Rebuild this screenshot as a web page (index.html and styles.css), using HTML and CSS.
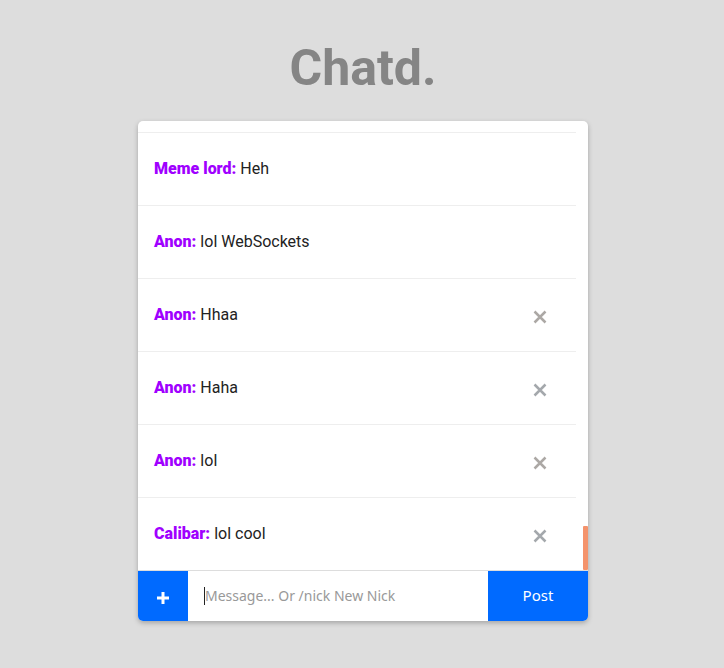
FILE: index.html
```html
<!DOCTYPE html>
<html lang="en">
<head>
<meta charset="utf-8">
<meta name="viewport" content="width=device-width, initial-scale=1">
<title>Chatd.</title>
<link rel="stylesheet" href="styles.css">
</head>
<body>
<h1 class="title">Chatd.</h1>
<main class="chat">
  <div class="messages">
    <ul class="list">
      <li class="message"><p><strong>Meme lord:</strong> Heh</p></li>
      <li class="message"><p><strong>Anon:</strong> lol WebSockets</p></li>
      <li class="message"><p><strong>Anon:</strong> Hhaa</p><button class="remove" type="button" aria-label="Delete message"><svg viewBox="0 0 32 32"><path d="M5 5l22 22M27 5L5 27"/></svg></button></li>
      <li class="message"><p><strong>Anon:</strong> Haha</p><button class="remove cool" type="button" aria-label="Delete message"><svg viewBox="0 0 32 32"><path d="M5 5l22 22M27 5L5 27"/></svg></button></li>
      <li class="message"><p><strong>Anon:</strong> lol</p><button class="remove" type="button" aria-label="Delete message"><svg viewBox="0 0 32 32"><path d="M5 5l22 22M27 5L5 27"/></svg></button></li>
      <li class="message"><p><strong>Calibar:</strong> lol cool</p><button class="remove cool" type="button" aria-label="Delete message"><svg viewBox="0 0 32 32"><path d="M5 5l22 22M27 5L5 27"/></svg></button></li>
    </ul>
    <div class="scroll"><div class="thumb"></div></div>
  </div>
  <form class="composer">
    <button class="add" type="button" aria-label="Add"><svg viewBox="0 0 12 12"><path d="M6 0v12M0 6h12"/></svg></button>
    <div class="field"><span class="caret"></span><input class="input" type="text" aria-label="Message" placeholder="Message... Or /nick New Nick"></div>
    <button class="post" type="submit">Post</button>
  </form>
</main>
</body>
</html>
```
FILE: styles.css
```css
* { box-sizing: border-box; }
body {
  margin: 0;
  padding: 36px 16px 36px 18px;
  background: #ddd;
  color: #222;
  font: 16px/24px Roboto, sans-serif;
}
.title {
  margin: 0 0 21px;
  color: #858585;
  font: 700 50px/64px Roboto, sans-serif;
  text-align: center;
}
.chat {
  max-width: 450px;
  margin: 0 auto;
  overflow: hidden;
  border-radius: 5px;
  background: #fff;
  box-shadow: 0 2px 5px rgba(0, 0, 0, .26);
}
.messages {
  display: flex;
  padding-top: 11px;
  border-bottom: 1px solid #ddd;
}
.list {
  flex: 1;
  margin: 0;
  padding: 0;
  list-style: none;
}
.message {
  display: flex;
  align-items: center;
  justify-content: space-between;
  height: 73px;
  padding: 0 28px 0 16px;
  border-top: 1px solid #eee;
}
.message p { margin: 0; }
.message strong { color: #a000ff; font-weight: 900; }
.remove {
  display: flex;
  margin: 3px 0 0;
  padding: 0;
  border: 0;
  background: none;
  color: #aca8a5;
}
.remove.cool { color: #a4a8ac; }
.remove svg {
  width: 16px;
  height: 16px;
  fill: none;
  stroke: currentColor;
  stroke-width: 5;
}
.scroll {
  display: flex;
  align-items: flex-end;
  justify-content: flex-end;
  width: 12px;
}
.thumb {
  width: 5px;
  height: 44px;
  border-radius: 1px;
  background: #f4936c;
}
.composer {
  display: flex;
  height: 50px;
}
.add, .post {
  border: 0;
  padding: 0;
  background: #006aff;
  color: #fff;
}
.add {
  display: flex;
  align-items: center;
  justify-content: center;
  width: 50px;
}
.add svg {
  width: 12px;
  height: 12px;
  margin-top: 4px;
  stroke: currentColor;
  stroke-width: 3;
}
.field {
  display: flex;
  flex: 1;
  align-items: center;
  min-width: 0;
  padding: 0 16px;
}
.caret {
  width: 1px;
  height: 18px;
  background: #222;
}
.input {
  flex: 1;
  min-width: 0;
  padding: 0;
  border: 0;
  outline: 0;
  background: none;
  font: 14px/24px "Noto Sans", sans-serif;
}
.input::placeholder { color: #999; opacity: 1; }
.post {
  width: 100px;
  padding-bottom: 2px;
  font: 15px/24px "Noto Sans", sans-serif;
}
```
